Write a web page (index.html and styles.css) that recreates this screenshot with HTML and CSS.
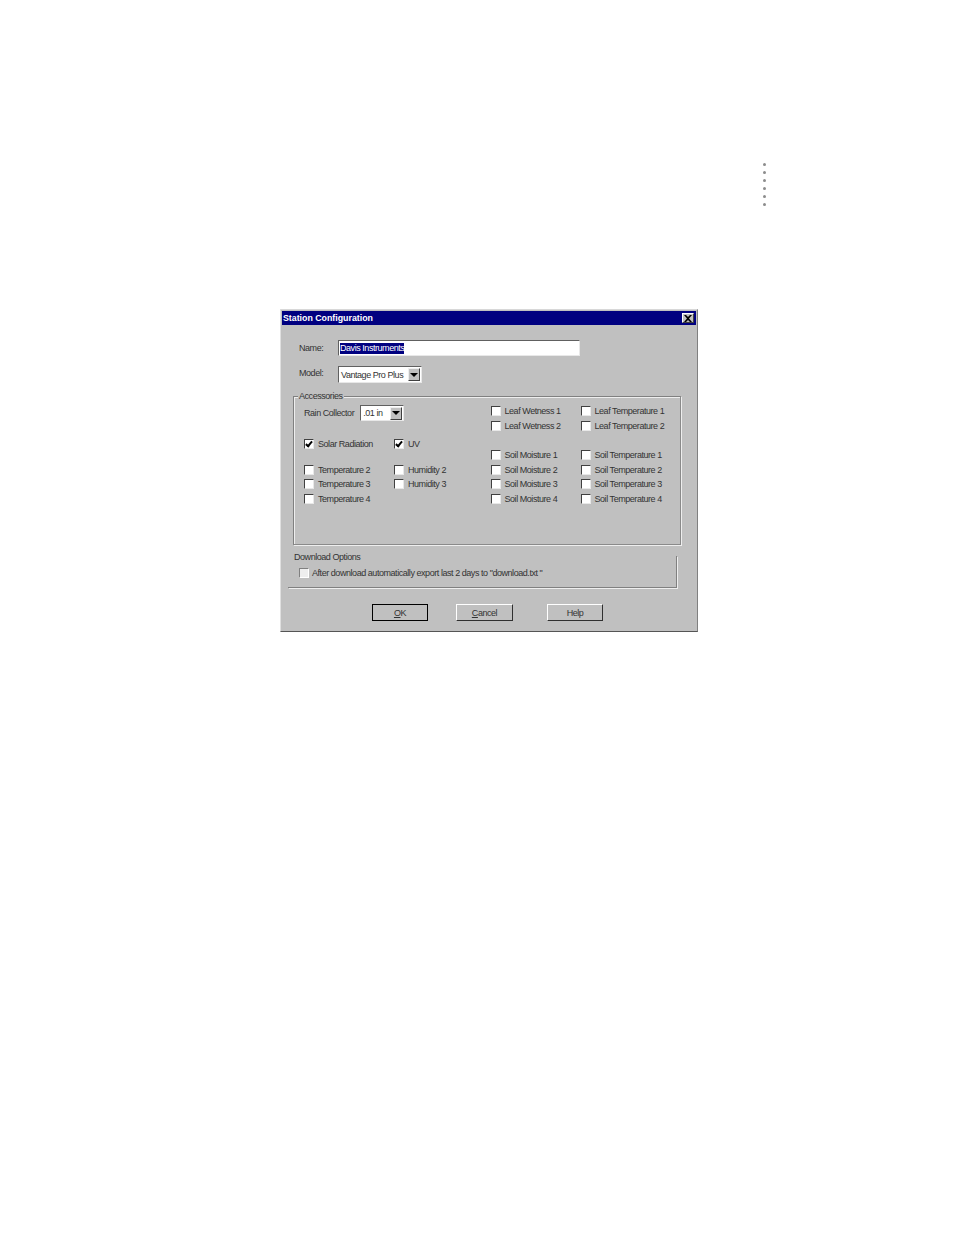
FILE: index.html
```html
<!DOCTYPE html>
<html lang="en">
<head>
    <meta charset="UTF-8">
    <title>Station Configuration</title>
    <link rel="stylesheet" href="styles.css">
</head>
<body>

<div class="page">
    <!-- Page edge marker -->
    <div class="dots">
        <span></span><span></span><span></span><span></span><span></span><span></span>
    </div>

    <div class="dialog">
        <div class="title-bar">
            <span>Station Configuration</span>
            <span class="close-btn">
                <svg width="8" height="7" viewBox="0 0 8 7"><path d="M0 0h2l2 2 2-2h2L5 3.500 8 7H6L4 5 2 7H0l3-3.500z" fill="#000"/></svg>
            </span>
        </div>

        <div class="field-row name-row">
            <label class="field-label">Name:</label>
            <div class="text-box"><span class="selected">Davis Instruments</span></div>
        </div>

        <div class="field-row model-row">
            <label class="field-label model-label">Model:</label>
            <div class="combo model-combo">
                <span class="combo-value">Vantage Pro Plus</span>
                <span class="combo-arrow"><i></i></span>
            </div>
        </div>

        <!-- Accessories -->
        <div class="group">
            <span class="legend">Accessories</span>
            <div class="group-left">
                <div class="rain-row">
                    <span>Rain Collector</span>
                    <div class="combo rain-combo">
                        <span class="combo-value">.01 in</span>
                        <span class="combo-arrow"><i></i></span>
                    </div>
                </div>
                <div class="check-grid solar-row">
                    <div class="check"><span class="box checked"></span>Solar Radiation</div>
                    <div class="check"><span class="box checked"></span>UV</div>
                </div>
                <div class="check-grid temp-rows">
                    <div class="check"><span class="box"></span>Temperature 2</div>
                    <div class="check"><span class="box"></span>Humidity 2</div>
                    <div class="check"><span class="box"></span>Temperature 3</div>
                    <div class="check"><span class="box"></span>Humidity 3</div>
                    <div class="check"><span class="box"></span>Temperature 4</div>
                </div>
            </div>
            <div class="group-right">
                <div class="check-grid leaf-rows">
                    <div class="check"><span class="box"></span>Leaf Wetness 1</div>
                    <div class="check"><span class="box"></span>Leaf Temperature 1</div>
                    <div class="check"><span class="box"></span>Leaf Wetness 2</div>
                    <div class="check"><span class="box"></span>Leaf Temperature 2</div>
                </div>
                <div class="check-grid soil-rows">
                    <div class="check"><span class="box"></span>Soil Moisture 1</div>
                    <div class="check"><span class="box"></span>Soil Temperature 1</div>
                    <div class="check"><span class="box"></span>Soil Moisture 2</div>
                    <div class="check"><span class="box"></span>Soil Temperature 2</div>
                    <div class="check"><span class="box"></span>Soil Moisture 3</div>
                    <div class="check"><span class="box"></span>Soil Temperature 3</div>
                    <div class="check"><span class="box"></span>Soil Moisture 4</div>
                    <div class="check"><span class="box"></span>Soil Temperature 4</div>
                </div>
            </div>
        </div>

        <!-- Download Options -->
        <div class="download">
            <div class="download-title">Download Options</div>
            <div class="check download-check"><span class="box flat"></span>After download automatically export last 2 days to "download.txt "</div>
        </div>

        <div class="buttons">
            <button class="button default"><u>O</u>K</button>
            <button class="button cancel"><u>C</u>ancel</button>
            <button class="button">Help</button>
        </div>
    </div>
</div>

</body>
</html>
```

FILE: styles.css
```css
body {
    margin: 0;
    background-color: #fff;
    font-family: "Liberation Sans", Arial, sans-serif;
    font-size: 9px;
    letter-spacing: -0.45px;
    color: #333;
}
.page {
    height: 1235px;
    position: relative;
    overflow: hidden;
    padding: 309px 0 0 280px;
    box-sizing: border-box;
}
.dots {
    position: absolute;
    left: 763px;
    top: 163px;
    display: flex;
    flex-direction: column;
    gap: 5px;
}
.dots span {
    width: 3px;
    height: 3px;
    border-radius: 50%;
    background-color: #8c8c8c;
}
.dialog {
    width: 418px;
    height: 323px;
    box-sizing: border-box;
    background-color: #c0c0c0;
    border-top: 1px solid #d8d8d8;
    border-left: 1px solid #e0e0e0;
    border-right: 1px solid #808080;
    border-bottom: 1px solid #555;
    padding: 1px;
}
.title-bar {
    height: 14px;
    background-color: #000080;
    color: #fff;
    font-weight: bold;
    font-size: 8.8px;
    letter-spacing: 0;
    display: flex;
    align-items: center;
    justify-content: space-between;
    padding: 0 2px 0 1px;
}
.close-btn {
    width: 12px;
    height: 10px;
    box-sizing: border-box;
    background-color: #c0c0c0;
    border: 1px solid;
    border-color: #fff #404040 #404040 #fff;
    display: flex;
    align-items: center;
    justify-content: center;
}
.field-row {
    display: flex;
    align-items: center;
    padding-left: 17px;
}
.name-row {
    margin-top: 15px;
    height: 16px;
}
.model-row {
    margin-top: 10px;
    height: 17px;
}
.field-label {
    width: 39px;
}
.model-label {
    padding-bottom: 3px;
}
.text-box {
    width: 242px;
    height: 16px;
    box-sizing: border-box;
    background-color: #fff;
    border: 1px solid;
    border-color: #606060 #e8e8e8 #e8e8e8 #606060;
    padding: 1px;
    display: flex;
    align-items: center;
}
.selected {
    background-color: #000080;
    color: #fff;
    line-height: 11px;
}
.combo {
    height: 17px;
    box-sizing: border-box;
    background-color: #fff;
    border: 1px solid;
    border-color: #606060 #e8e8e8 #e8e8e8 #606060;
    display: flex;
    align-items: center;
    justify-content: space-between;
    padding: 0 1px 0 2px;
    white-space: nowrap;
}
.model-combo {
    width: 84px;
}
.rain-combo {
    width: 44px;
    height: 16px;
}
.combo-arrow {
    width: 12px;
    height: 13px;
    box-sizing: border-box;
    background-color: #c0c0c0;
    border: 1px solid;
    border-color: #eee #404040 #404040 #eee;
    display: flex;
    align-items: center;
    justify-content: center;
}
.combo-arrow i {
    border-left: 4px solid transparent;
    border-right: 4px solid transparent;
    border-top: 4px solid #000;
}
.group {
    position: relative;
    margin: 13px 0 0 11px;
    width: 388px;
    height: 149px;
    box-sizing: border-box;
    border: 1px solid;
    border-color: #808080 #8a8a8a #8a8a8a #808080;
    box-shadow: 1px 1px 0 #eee, inset 1px 1px 0 #eee;
    display: flex;
}
.legend {
    position: absolute;
    left: 4px;
    top: -6px;
    padding: 0 1px;
    background-color: #c0c0c0;
    line-height: 11px;
}
.group-left {
    width: 196.500px;
    padding-left: 10px;
    box-sizing: border-box;
}
.rain-row {
    display: flex;
    align-items: center;
    gap: 6px;
    margin-top: 8px;
}
.check-grid {
    display: grid;
    grid-template-columns: 90px 90px;
}
.solar-row {
    margin-top: 16px;
}
.temp-rows {
    margin-top: 11px;
}
.check {
    display: flex;
    align-items: center;
    height: 14.6px;
    white-space: nowrap;
}
.box {
    width: 10px;
    height: 10px;
    box-sizing: border-box;
    margin-right: 4px;
    background-color: #fff;
    border: 1px solid;
    border-color: #404040 #e8e8e8 #e8e8e8 #404040;
    position: relative;
    flex: none;
}
.box.flat {
    background-color: #eee;
    border-color: #808080 #fff #fff #808080;
    margin-right: 3px;
}
.box.checked::after {
    content: "";
    position: absolute;
    left: 2px;
    top: 0;
    width: 2px;
    height: 5px;
    border: solid #000;
    border-width: 0 2px 2px 0;
    transform: rotate(40deg);
}
.leaf-rows {
    margin-top: 7px;
}
.soil-rows {
    margin-top: 14.6px;
}
.download {
    display: flow-root;
    margin: 11px 0 0 6px;
    width: 389px;
    height: 32px;
    box-sizing: border-box;
    border-right: 1px solid #808080;
    border-bottom: 1px solid #808080;
    box-shadow: 1px 1px 0 #eee;
    padding-left: 6px;
}
.download-title {
    line-height: 11px;
    margin-top: -4px;
}
.download-check {
    margin: 3px 0 0 5px;
}
.buttons {
    display: grid;
    grid-template-columns: 84px 91px 56px;
    margin: 16px 0 0 90px;
}
.button {
    width: 56px;
    height: 17px;
    box-sizing: border-box;
    padding: 0;
    font-family: inherit;
    font-size: 9px;
    letter-spacing: inherit;
    color: #333;
    background-color: #c0c0c0;
    border: 1px solid;
    border-color: #fff #303030 #303030 #fff;
}
.button.cancel {
    width: 57px;
}
.button.default {
    border-color: #000;
}
```
